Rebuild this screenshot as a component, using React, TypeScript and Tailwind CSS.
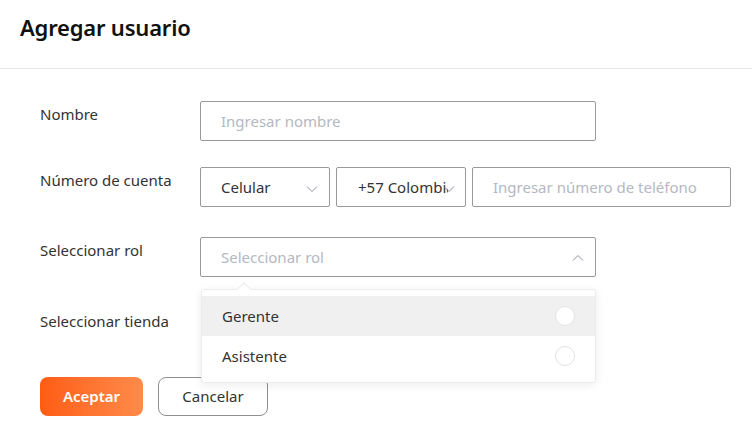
import React from "react";

function Chevron({ up = false }: { up?: boolean }) {
  return (
    <svg width="12" height="7" viewBox="0 0 12 7" fill="none" className="shrink-0">
      <path
        d={up ? "M1 6.5L6 1.5L11 6.5" : "M1 0.5L6 5.5L11 0.5"}
        stroke="#8a8f99"
        strokeWidth="1"
      />
    </svg>
  );
}

function Row({ label, children, className = "" }: { label: string; children: React.ReactNode; className?: string }) {
  return (
    <div className={"flex items-start " + className}>
      <div className="w-[160px] shrink-0 pt-[2px] text-[15px] text-[#333333]">{label}</div>
      {children}
    </div>
  );
}

export default function App() {
  return (
    <div
      className="w-[752px] h-[445px] bg-white overflow-hidden"
      style={{ fontFamily: '"Noto Sans", "Open Sans", sans-serif' }}
    >
      <div className="h-[69px] border-b border-[#e6e6e6] px-5 pt-[11px]">
        <h1 className="text-[22px] font-semibold text-[#111111] tracking-[-0.2px]">Agregar usuario</h1>
      </div>

      <div className="px-10 pt-8">
        <Row label="Nombre">
          <div className="w-[396px] h-[40px] border border-[#999999] rounded-[2px] flex items-center px-5 text-[15px] text-[#b4b8c2]">
            Ingresar nombre
          </div>
        </Row>

        <Row label="Número de cuenta" className="mt-[26px]">
          <div className="flex gap-[6px]">
            <div className="w-[130px] h-[40px] border border-[#999999] rounded-[2px] flex items-center justify-between pl-5 pr-[11px] text-[15px] text-[#333333]">
              <span>Celular</span>
              <span className="mt-[5px]"><Chevron /></span>
            </div>
            <div className="relative w-[130px] h-[40px] border border-[#999999] rounded-[2px] flex items-center pl-[21px] text-[15px] text-[#333333]">
              <span className="w-[90px] overflow-hidden whitespace-nowrap">+57 Colombia</span>
              <span className="absolute right-[10px] top-[18px]"><Chevron /></span>
            </div>
            <div className="w-[259px] h-[40px] border border-[#999999] rounded-[2px] flex items-center pl-5 text-[15px] text-[#b4b8c2] whitespace-nowrap">
              Ingresar número de teléfono
            </div>
          </div>
        </Row>

        <Row label="Seleccionar rol" className="mt-[30px]">
          <div className="relative">
            <div className="w-[396px] h-[40px] border border-[#999999] rounded-[2px] flex items-center justify-between pl-5 pr-[11px] text-[15px] text-[#b4b8c2]">
              <span>Seleccionar rol</span>
              <Chevron up />
            </div>
            <div className="absolute left-[1px] top-[52px] w-[395px] z-10 bg-white rounded-[3px] border border-[#ececf0] shadow-[0_2px_10px_rgba(0,0,0,0.08)] py-[6px]">
              <div className="absolute -top-[6px] left-[37px] w-[10px] h-[10px] rotate-45 bg-white border-l border-t border-[#ececf0]" />
              <div className="relative h-[40px] bg-[#f0f0f0] flex items-center justify-between pl-5 pr-5 text-[15px] text-[#333333]">
                <span>Gerente</span>
                <span className="w-[20px] h-[20px] rounded-full bg-white border border-[#e2e4e8]" />
              </div>
              <div className="relative h-[40px] flex items-center justify-between pl-5 pr-5 text-[15px] text-[#333333]">
                <span>Asistente</span>
                <span className="w-[20px] h-[20px] rounded-full bg-white border border-[#dfe1e6]" />
              </div>
            </div>
          </div>
        </Row>

        <Row label="Seleccionar tienda" className="mt-[31px]">
          <div className="h-[40px]" />
        </Row>

        <div className="flex gap-[15px] mt-[29px]">
          <button className="w-[103px] h-[39px] rounded-[8px] bg-gradient-to-r from-[#ff5c10] to-[#ff8a48] text-white text-[15px] font-semibold">
            Aceptar
          </button>
          <button className="w-[110px] h-[39px] rounded-[8px] border border-[#8f8f8f] bg-white text-[#333333] text-[15px]">
            Cancelar
          </button>
        </div>
      </div>
    </div>
  );
}
